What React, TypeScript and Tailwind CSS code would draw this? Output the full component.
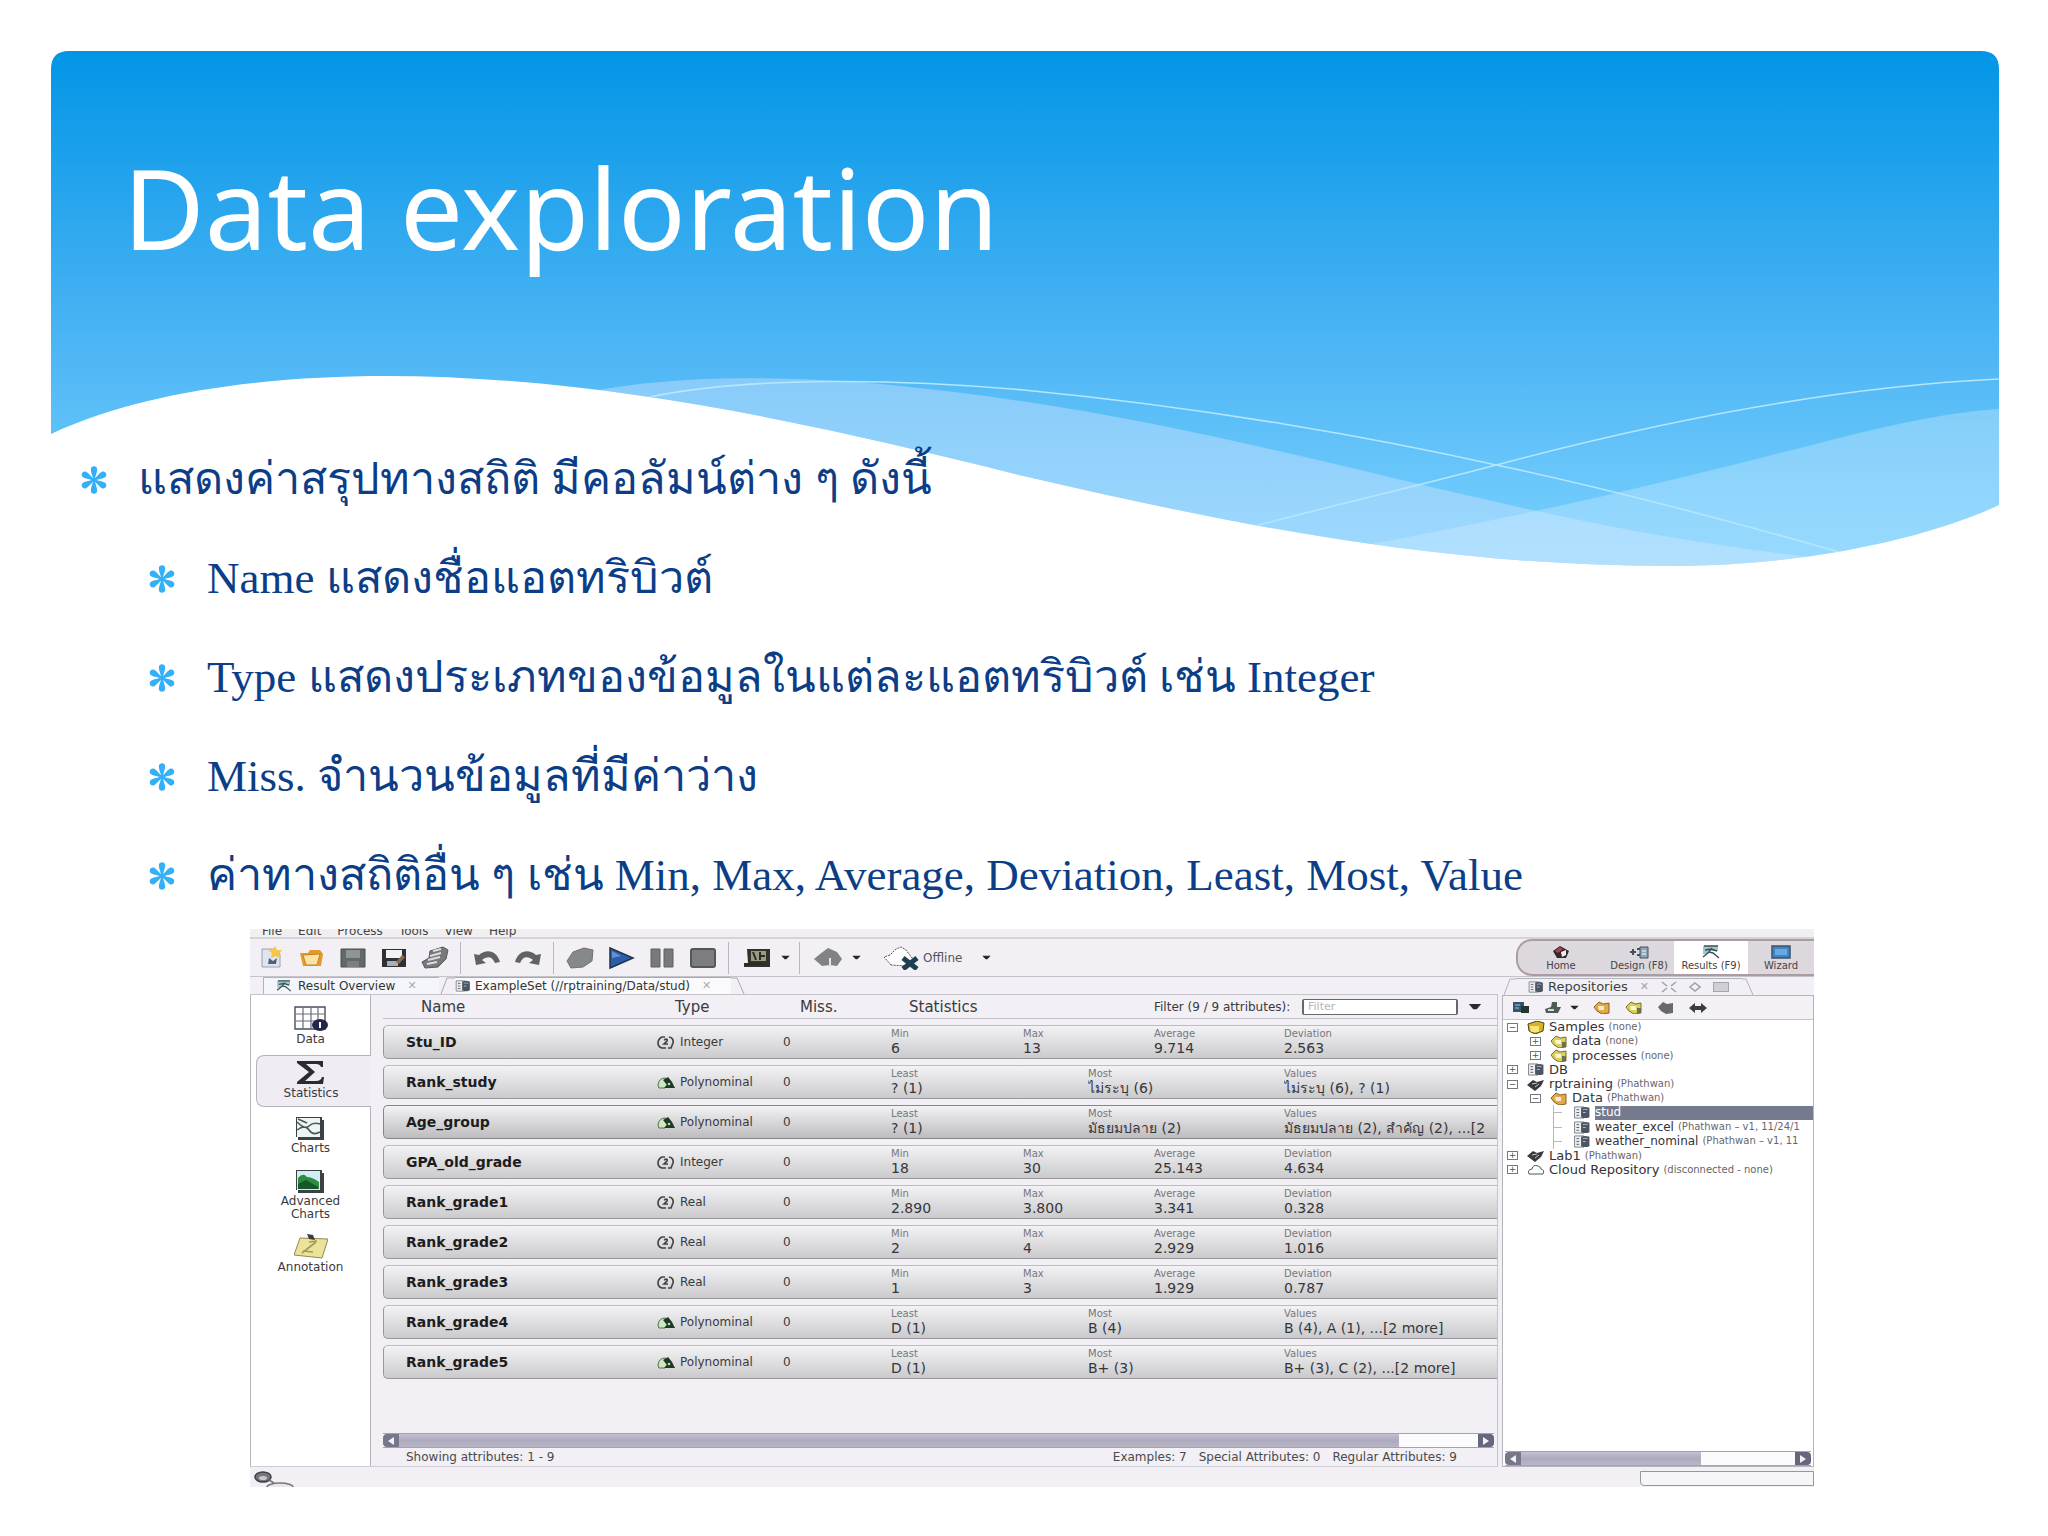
import type { ReactNode } from "react";

type Stat = { label: string; value: string };
type Row = { name: string; type: "Integer" | "Real" | "Polynominal"; stats: Stat[] };

function numeric(min: string, max: string, avg: string, dev: string): Stat[] {
  return [
    { label: "Min", value: min },
    { label: "Max", value: max },
    { label: "Average", value: avg },
    { label: "Deviation", value: dev },
  ];
}

function nominal(least: string, most: string, values: string): Stat[] {
  return [
    { label: "Least", value: least },
    { label: "Most", value: most },
    { label: "Values", value: values },
  ];
}

const rows: Row[] = [
  { name: "Stu_ID", type: "Integer", stats: numeric("6", "13", "9.714", "2.563") },
  { name: "Rank_study", type: "Polynominal", stats: nominal("? (1)", "ไม่ระบุ (6)", "ไม่ระบุ (6), ? (1)") },
  { name: "Age_group", type: "Polynominal", stats: nominal("? (1)", "มัธยมปลาย (2)", "มัธยมปลาย (2), สำคัญ (2), ...[2") },
  { name: "GPA_old_grade", type: "Integer", stats: numeric("18", "30", "25.143", "4.634") },
  { name: "Rank_grade1", type: "Real", stats: numeric("2.890", "3.800", "3.341", "0.328") },
  { name: "Rank_grade2", type: "Real", stats: numeric("2", "4", "2.929", "1.016") },
  { name: "Rank_grade3", type: "Real", stats: numeric("1", "3", "1.929", "0.787") },
  { name: "Rank_grade4", type: "Polynominal", stats: nominal("D (1)", "B (4)", "B (4), A (1), ...[2 more]") },
  { name: "Rank_grade5", type: "Polynominal", stats: nominal("D (1)", "B+ (3)", "B+ (3), C (2), ...[2 more]") },
];

const bullets = [
  "Name แสดงชื่อแอตทริบิวต์",
  "Type แสดงประเภทของข้อมูลในแต่ละแอตทริบิวต์ เช่น Integer",
  "Miss. จำนวนข้อมูลที่มีค่าว่าง",
  "ค่าทางสถิติอื่น ๆ เช่น Min, Max, Average, Deviation, Least, Most, Value",
];

function Banner() {
  return (
    <svg
      viewBox="0 0 1949 516"
      preserveAspectRatio="none"
      className="col-start-1 row-start-1 h-full w-full"
      aria-hidden="true"
    >
      <defs>
        <linearGradient id="sky" x1="0" y1="0" x2="0" y2="1">
          <stop offset="0" stopColor="#0295e6" />
          <stop offset="0.55" stopColor="#4ab4f4" />
          <stop offset="0.85" stopColor="#6cc8fb" />
          <stop offset="1" stopColor="#7bd0ff" />
        </linearGradient>
        <clipPath id="wave">
          <path d="M0 18 Q0 0 18 0 H1931 Q1949 0 1949 18 V454 C1880 486 1760 515 1620 515 C1400 515 1200 478 973 425 C780 377 560 325 334 325 C220 325 90 340 0 383 Z" />
        </clipPath>
      </defs>
      <g clipPath="url(#wave)">
        <rect width="1949" height="516" fill="url(#sky)" />
        <path
          d="M520 345 C600 325 720 322 850 335 C1100 360 1300 420 1482 459 C1580 481 1680 497 1760 506 V600 H520 Z"
          fill="#d6e6ff"
          fillOpacity="0.4"
        />
        <path
          d="M1300 497 C1500 460 1620 430 1789 387 C1850 372 1900 361 1949 358 V600 H1300 Z"
          fill="#d8f0ff"
          fillOpacity="0.33"
        />
        <g fill="none" stroke="#b4e6ff" strokeWidth="1.6">
          <path d="M599 346 C700 325 850 328 973 339 C1160 357 1330 388 1446 414 C1570 440 1690 473 1789 501" />
          <path d="M1208 474 C1290 453 1370 434 1446 414 C1600 373 1780 336 1949 328" />
        </g>
      </g>
    </svg>
  );
}

function Asterisk() {
  return (
    <svg viewBox="0 0 26 28" className="h-7 w-[26px] shrink-0" fill="#33b0f8" aria-hidden="true">
      {[0, 60, 120, 180, 240, 300].map((a) => (
        <path
          key={a}
          transform={`rotate(${a} 13 14)`}
          d="M12 14 C12 10 9.8 7 9.8 3.6 C9.8 -0.8 16.2 -0.8 16.2 3.6 C16.2 7 14 10 14 14 Z"
        />
      ))}
    </svg>
  );
}

function Svg({ children, className = "h-6 w-7" }: { children: ReactNode; className?: string }) {
  return (
    <svg viewBox="0 0 28 24" className={`${className} shrink-0`} aria-hidden="true">
      {children}
    </svg>
  );
}

const icons = {
  create: (
    <Svg>
      <path d="M5 3h13l5 5v13H5z" fill="#dfe5ee" stroke="#9aa3b0" />
      <path d="M11 18l1-6 4 3 4-3-1 6z" fill="#55616f" />
      <path d="M18 0l2 4 5 0-3 4 2 4-5-2-5 2 1-5-4-3 5-1z" fill="#f6c54a" />
    </Svg>
  ),
  open: (
    <Svg>
      <path d="M2 7h8l2-3h10l3 4-2 12H5z" fill="#e39a2c" />
      <path d="M5 9l17-1-3 11H8z" fill="#fbe3a6" stroke="#c98322" />
    </Svg>
  ),
  save: (
    <Svg>
      <path d="M2 3h24v18H2z" fill="#63686b" stroke="#4a4e51" />
      <path d="M7 4h14v8H7z" fill="#8e9594" />
      <path d="M8 15h12v6H8z" fill="#7b807f" />
    </Svg>
  ),
  saveAs: (
    <Svg>
      <path d="M2 3h24v18H2z" fill="#2f3135" />
      <path d="M6 4h16v8H6z" fill="#f2f2f4" />
      <path d="M7 15h11v5H7z" fill="#aab0b8" />
      <path d="M16 16l6-7 3 2-6 7z" fill="#8c6b4d" />
    </Svg>
  ),
  print: (
    <Svg>
      <path d="M9 5l13-4 5 3-2 9-8 8-13 1-3-6 7-4z" fill="#77797d" stroke="#55575b" />
      <path d="M9 10l11-3M7 14l12-3M6 18l10-2M12 5l8-2" stroke="#dcdde0" strokeWidth="2" />
    </Svg>
  ),
  undo: (
    <Svg>
      <path d="M1 8l2 11 10-2-4-3c5-4 10-4 13 3l5-1C24 5 14 2 6 9z" fill="#606266" />
    </Svg>
  ),
  redo: (
    <Svg>
      <path d="M27 8l-2 11-10-2 4-3C14 10 9 10 6 17l-5-1C4 5 14 2 22 9z" fill="#606266" />
    </Svg>
  ),
  build: (
    <Svg>
      <path d="M1 15L7 6 18 2l9 2-1 11-9 6-12 1z" fill="#86888b" stroke="#6f7174" />
    </Svg>
  ),
  play: (
    <Svg>
      <path d="M3 2l23 10L3 22z" fill="#2b5fa8" stroke="#24324a" strokeWidth="1.5" />
      <path d="M5 5l9 5-9 2z" fill="#5f93d6" />
    </Svg>
  ),
  pause: (
    <Svg>
      <path d="M3 3h9v18H3zM16 3h9v18h-9z" fill="#77797b" stroke="#5e6062" />
    </Svg>
  ),
  stop: (
    <Svg>
      <rect x="2" y="3" width="24" height="18" rx="2" fill="#7b7d7f" stroke="#555759" strokeWidth="2" />
    </Svg>
  ),
  monitor: (
    <Svg>
      <path d="M4 3h23v18H1v-4h4z" fill="#33322a" />
      <path d="M8 5h15v10H8z" fill="#9c9b83" />
      <path d="M10 6l3 8M17 6v8M18 10h4M2 18h18" stroke="#2b2a24" strokeWidth="2" />
    </Svg>
  ),
  agent: (
    <Svg>
      <path d="M0 13l6-5 8-6 9 4 5 7-5 7-7-1-8 1z" fill="#808286" />
      <path d="M16 12v9" stroke="#e4e4e8" strokeWidth="2" />
    </Svg>
  ),
};

function CaretDown() {
  return (
    <svg viewBox="0 0 10 6" className="h-[5px] w-[9px] shrink-0" aria-hidden="true">
      <path d="M0 1h10L6 5H4z" fill="#26262a" />
    </svg>
  );
}

function ToolButton({ label, children }: { label: string; children: ReactNode }) {
  return (
    <button type="button" aria-label={label} className="flex h-9 w-[41px] items-center justify-center">
      {children}
    </button>
  );
}

function Separator() {
  return <div className="mx-[5px] h-8 w-px bg-[#b9b7bf]" />;
}

function DataSetIcon({ className = "h-3 w-4" }: { className?: string }) {
  return (
    <svg viewBox="0 0 18 14" className={`${className} shrink-0`} aria-hidden="true">
      <path d="M1 1h10v12H1z" fill="#eef0f4" stroke="#777d88" />
      <path d="M3 4h3M3 7h3M3 10h3" stroke="#555" />
      <path d="M8 2q4-2 9 0v10q-4 2-9 0z" fill="#4c5563" />
      <path d="M10 4q2-1 5 0M10 7h3" stroke="#b7c3d6" />
    </svg>
  );
}

function ResultsIcon({ className = "h-3 w-4" }: { className?: string }) {
  return (
    <svg viewBox="0 0 18 14" className={`${className} shrink-0`} aria-hidden="true">
      <path d="M1 1h15v5H6v3H1z" fill="#9cc9d0" />
      <path d="M2 1h14M3 5l6-1 6 2M1 12l6-5 4 1 6 5M6 8l4-5" stroke="#3d5053" strokeWidth="1.4" fill="none" />
    </svg>
  );
}

function ViewTabs() {
  return (
    <div className="flex h-[18px] min-w-0 items-end border-b border-[#c6c4cb] pl-[13px]">
      <button
        type="button"
        className="flex h-[17px] w-[176px] items-center gap-1 border-l border-t border-[#b3b1ba] bg-[#f4f6fb] pl-3 text-[12px] leading-4 text-[#333]"
      >
        <ResultsIcon />
        <span className="pl-[2px]">Result Overview</span>
        <span className="pl-2 text-[11px] text-[#aaa]">✕</span>
      </button>
      <svg viewBox="0 0 16 17" className="h-[17px] w-4 shrink-0" fill="none" stroke="#a9a7b0" aria-hidden="true">
        <path d="M2 17L8 1h8" />
      </svg>
      <button
        type="button"
        className="flex h-[17px] w-[276px] items-center gap-1 border-t border-[#a9a7b0] bg-[#fafafc] text-[12px] leading-4 text-[#333]"
      >
        <DataSetIcon />
        <span className="whitespace-nowrap">ExampleSet (//rptraining/Data/stud)</span>
        <span className="pl-2 text-[11px] text-[#aaa]">✕</span>
      </button>
      <svg viewBox="0 0 16 17" className="h-[17px] w-4 shrink-0" fill="none" stroke="#a9a7b0" aria-hidden="true">
        <path d="M0 1h6l7 16" />
      </svg>
    </div>
  );
}

const chartFrame = <path d="M2 3h26v3h2v20H4V23H2z" fill="#3b4144" />;

const sideItems = [
  {
    label: "Data",
    box: "h-[60px] border-r border-[#b5b3bb] pt-[10px]",
    icon: (
      <>
        <path d="M1 2h30v22H1z" fill="#fdfdff" stroke="#4c4f58" strokeWidth="1.4" />
        <path d="M1 9h30M1 16h30M9 2v22M17 2v22M24 2v22" stroke="#6b6e77" strokeWidth="1.2" />
        <ellipse cx="26" cy="20" rx="8" ry="6" fill="#23264a" />
        <path d="M26 17v6" stroke="#fff" strokeWidth="2" />
      </>
    ),
  },
  {
    label: "Statistics",
    box: "ml-[5px] h-[52px] rounded-l-lg border-y border-l border-[#b5b3bb] bg-[#efecf4] pt-[3px] pr-[6px]",
    icon: <path d="M3 2h26v6h-2q-1-3-5-3H12l9 8-10 9h11q5 0 6-4h2l-1 7H3v-2l12-10L3 4z" fill="#2b2b2e" />,
  },
  {
    label: "Charts",
    box: "h-[53px] border-r border-[#b5b3bb] pt-[7px]",
    icon: (
      <>
        {chartFrame}
        <path d="M3 4h23v19H3z" fill="#eef4f2" />
        <path d="M3 8q8 8 12 4t11-2M3 16q8-6 12 0t11 2M4 5l9 4" stroke="#46585a" fill="none" strokeWidth="1.5" />
      </>
    ),
  },
  {
    label: "Advanced Charts",
    box: "h-[66px] border-r border-[#b5b3bb] pt-[7px]",
    icon: (
      <>
        {chartFrame}
        <path d="M3 4h23v19H3z" fill="#cfeef2" />
        <path d="M4 11q5-6 9-1 5 0 12 5v7H4z" fill="#2f8a42" />
        <path d="M4 17l8-4 12 7v2H4z" fill="#14582b" />
      </>
    ),
  },
  {
    label: "Annotation",
    box: "grow border-r border-[#b5b3bb] pt-[7px]",
    icon: (
      <>
        <path d="M6 5l28 1-6 19-28-3z" fill="#ece39a" stroke="#8f8850" />
        <path d="M8 20L22 9M9 18l10 1M23 8l-8 1" stroke="#a3995a" strokeWidth="1.6" />
        <path d="M13 1l6 1 2 5-6-1z" fill="#3c3c40" />
      </>
    ),
  },
];

function SideBar() {
  return (
    <nav className="flex w-[121px] shrink-0 flex-col border-l border-[#b5b3bb] bg-white">
      {sideItems.map((item) => (
        <button key={item.label} type="button" className={`flex flex-col items-center justify-start ${item.box}`}>
          <svg viewBox="0 0 34 28" className="h-7 w-[34px] shrink-0" aria-hidden="true">
            {item.icon}
          </svg>
          <span className="w-[80px] text-center text-[12px] leading-[13px] text-[#3a3a3e]">{item.label}</span>
        </button>
      ))}
    </nav>
  );
}

function TypeIcon({ type }: { type: Row["type"] }) {
  if (type === "Polynominal") {
    return (
      <svg viewBox="0 0 18 13" className="h-[13px] w-[18px] shrink-0" aria-hidden="true">
        <path d="M1 9q1-7 7-7l4 3-4 7H2z" fill="#cfe6c4" stroke="#56704e" />
        <path d="M6 4l5-3 4 5 3 6H7l3-3z" fill="#1d3a22" />
        <circle cx="12" cy="8" r="1.3" fill="#b9dcb0" />
      </svg>
    );
  }
  return (
    <svg viewBox="0 0 18 13" className="h-[13px] w-[18px] shrink-0" aria-hidden="true">
      <path d="M8 1H5Q1 3 1 7t4 5h4M7 4q4-2 3 1L7 8h4M12 1q5 1 4 6l-2 5h-3" stroke="#444" strokeWidth="1.7" fill="none" />
    </svg>
  );
}

function StatisticsTable() {
  return (
    <table className="-mt-[6px] w-full table-fixed border-separate border-spacing-x-0 border-spacing-y-[6px]">
      <colgroup>
        <col className="w-[274px]" />
        <col className="w-[126px]" />
        <col className="w-[108px]" />
        <col className="w-[132px]" />
        <col className="w-[65px]" />
        <col className="w-[66px]" />
        <col className="w-[130px]" />
        <col />
      </colgroup>
      <thead>
        <tr className="text-left text-[15px] leading-4 text-[#3a3a40] [&>th]:h-6 [&>th]:border-b [&>th]:border-[#c2c0c8] [&>th]:p-0 [&>th]:font-normal">
          <th className="indent-[38px]">Name</th>
          <th className="indent-[18px]">Type</th>
          <th className="indent-[17px]">Miss.</th>
          <th className="indent-[18px]" colSpan={3}>Statistics</th>
          <th colSpan={2}>
            <div className="flex items-center">
              <label htmlFor="filter" className="w-[148px] whitespace-nowrap text-[12px]">
                Filter (9 / 9 attributes):
              </label>
              <input
                id="filter"
                placeholder="Filter"
                className="h-4 w-[156px] rounded-[2px] border border-x-2 border-[#66666c] bg-white px-1 text-[11px] leading-3 placeholder:text-[#b5b5b8]"
              />
              <button type="button" aria-label="Filter options" className="px-[10px]">
                <svg viewBox="0 0 14 8" className="h-[7px] w-[14px]" aria-hidden="true">
                  <path d="M0 1h14L9 7H5z" fill="#2a2a2e" />
                </svg>
              </button>
            </div>
          </th>
        </tr>
      </thead>
      <tbody>
        {rows.map((row) => {
          const selected = row.name === "Age_group";
          return (
            <tr
              key={row.name}
              className={
                "[&>td]:h-[34px] [&>td]:border-y [&>td]:p-0 [&>td]:bg-linear-to-b [&>td]:from-[#f3f2f4] " +
                (selected
                  ? "[&>td]:border-[#85858a] [&>td]:to-[#bdbcbe]"
                  : "[&>td]:border-b-[#98979b] [&>td]:border-t-[#bcbbc0] [&>td]:to-[#cbcacd]")
              }
            >
              <td className="rounded-l-[5px] border-l border-l-[#98979b] indent-[22px] text-[14px] leading-4 font-bold text-[#1d1d20]">
                {row.name}
              </td>
              <td>
                <div className="flex items-center gap-[5px] text-[12px] leading-4 text-[#3a3a3e]">
                  <TypeIcon type={row.type} />
                  {row.type}
                </div>
              </td>
              <td className="text-[12px] leading-4 text-[#3a3a3e]">0</td>
              {row.stats.map((s) => (
                <td key={s.label} colSpan={s.label === "Max" || s.label === "Least" || s.label === "Most" ? 2 : 1}>
                  <div className="overflow-hidden whitespace-nowrap">
                    <div className="text-[10px] leading-3 text-[#77777c]">{s.label}</div>
                    <div className="text-[14px] leading-4 text-[#36363a]">{s.value}</div>
                  </div>
                </td>
              ))}
            </tr>
          );
        })}
      </tbody>
    </table>
  );
}

function ScrollBar({ thumb }: { thumb: string }) {
  return (
    <div className="flex h-[15px] border-y border-[#a3a1b3] bg-white">
      <button type="button" aria-label="Scroll left" className="flex w-4 items-center justify-center rounded-l bg-[#77778a]">
        <svg viewBox="0 0 8 8" className="h-2 w-2" fill="#f2f2f6" aria-hidden="true">
          <path d="M7 0v8L1 4z" />
        </svg>
      </button>
      <div className={`bg-linear-to-b from-[#c4c0d2] via-[#aeaabd] to-[#b9b6c8] ${thumb}`} />
      <div className="grow bg-[#fbfafd]" />
      <button type="button" aria-label="Scroll right" className="flex w-4 items-center justify-center rounded-r bg-[#66667c]">
        <svg viewBox="0 0 8 8" className="h-2 w-2" fill="#f2f2f6" aria-hidden="true">
          <path d="M1 0v8l6-4z" />
        </svg>
      </button>
    </div>
  );
}

function TreeIcon({ kind }: { kind: string }) {
  if (kind === "set") return <DataSetIcon className="h-[13px] w-[18px]" />;
  return (
    <svg viewBox="0 0 18 13" className="h-[13px] w-[18px] shrink-0" aria-hidden="true">
      {kind === "samples" && (
        <>
          <path d="M1 3l9-3 7 2-1 8-8 3-6-3z" fill="#d8b425" stroke="#4d4318" />
          <path d="M3 5h9v6H4z" fill="#f6e479" />
        </>
      )}
      {kind === "folder" && (
        <>
          <path d="M1 6l5-5 4 2 6-1v10l-7 1-5-3z" fill="#d9cf5c" stroke="#76702c" />
          <path d="M5 5h6v4H6z" fill="#fbf7c8" />
          <path d="M12 7h4v5h-4z" fill="#70704a" />
        </>
      )}
      {kind === "orange" && (
        <>
          <path d="M1 6l5-5 4 2 6-1v10l-7 1-5-3z" fill="#e3a84a" stroke="#8a6224" />
          <path d="M5 5h6v4H6z" fill="#fdeccb" />
        </>
      )}
      {kind === "repo" && (
        <>
          <path d="M0 7l6-5 4 2 7-2-3 6-6 5-4-3z" fill="#3a3a3e" />
          <path d="M5 6l5-1M8 9l4-3" stroke="#c9c9cf" />
        </>
      )}
      {kind === "cloud" && <path d="M2 11q-2-4 3-5 1-5 6-3 3 1 3 3 4 1 2 5z" fill="#fff" stroke="#555" />}
    </svg>
  );
}

const tree = [
  { depth: 0, kind: "samples", sign: "−", name: "Samples", note: "(none)" },
  { depth: 1, kind: "folder", sign: "+", name: "data", note: "(none)" },
  { depth: 1, kind: "folder", sign: "+", name: "processes", note: "(none)" },
  { depth: 0, kind: "set", sign: "+", name: "DB", note: "" },
  { depth: 0, kind: "repo", sign: "−", name: "rptraining", note: "(Phathwan)" },
  { depth: 1, kind: "orange", sign: "−", name: "Data", note: "(Phathwan)" },
  { depth: 2, kind: "set", sign: "", name: "stud", note: "", selected: true },
  { depth: 2, kind: "set", sign: "", name: "weater_excel", note: "(Phathwan – v1, 11/24/1" },
  { depth: 2, kind: "set", sign: "", name: "weather_nominal", note: "(Phathwan – v1, 11" },
  { depth: 0, kind: "repo", sign: "+", name: "Lab1", note: "(Phathwan)" },
  { depth: 0, kind: "cloud", sign: "+", name: "Cloud Repository", note: "(disconnected - none)" },
];

const indents = ["pl-1 text-[13px]", "pl-[27px] text-[13px]", "pl-[50px] text-[12px]"];

function RepositoryPanel() {
  return (
    <aside className="flex w-[312px] shrink-0 flex-col">
      <div className="flex h-[18px] items-end">
        <svg viewBox="0 0 14 17" className="h-[17px] w-[14px]" fill="none" stroke="#b3b1ba" aria-hidden="true">
          <path d="M2 17L8 1h6" />
        </svg>
        <div className="flex h-[17px] w-[226px] items-center gap-1 border-t border-[#b3b1ba] pl-3 text-[13px] leading-4 text-[#3f3f44]">
          <DataSetIcon />
          <span className="pr-2">Repositories</span>
          <span className="text-[11px] text-[#a2a2a8]">✕</span>
          <svg viewBox="0 0 16 12" className="ml-2 h-3 w-4" fill="none" stroke="#a2a2a8" strokeWidth="1.6" aria-hidden="true">
            <path d="M1 1l5 4M15 1l-5 4M1 11l5-4M15 11l-5-4" />
          </svg>
          <svg viewBox="0 0 12 12" className="ml-2 h-3 w-3" fill="none" stroke="#a2a2a8" strokeWidth="1.6" aria-hidden="true">
            <path d="M6 2l5 4-5 4-5-4z" />
          </svg>
          <span className="ml-2 h-[10px] w-4 border border-[#a5a5aa] bg-[#cfcfd5]" />
        </div>
        <svg viewBox="0 0 14 17" className="h-[17px] w-[14px]" fill="none" stroke="#b3b1ba" aria-hidden="true">
          <path d="M0 1h4l7 16" />
        </svg>
      </div>
      <div className="flex grow flex-col border border-[#b5b3bb] bg-white">
        <div className="flex h-6 shrink-0 items-center gap-[14px] border-b border-[#c6c4cb] bg-[#f3f1f6] pl-[9px]">
          <button type="button" aria-label="Add repository">
            <svg viewBox="0 0 18 13" className="h-[13px] w-[18px]" aria-hidden="true">
              <path d="M1 1h11v10H1z" fill="#33556e" />
              <path d="M9 5h8v7h-8z" fill="#27352f" />
              <path d="M3 4h5M3 7h4" stroke="#a7c7dd" />
            </svg>
          </button>
          <button type="button" aria-label="Import data" className="flex items-center gap-2">
            <svg viewBox="0 0 18 13" className="h-[13px] w-[18px]" aria-hidden="true">
              <path d="M1 8l6-2 1-5h5v5h4l-3 6H2z" fill="#4f5b55" />
              <path d="M4 9h6" stroke="#d2d8d4" strokeWidth="2" />
            </svg>
            <CaretDown />
          </button>
          <button type="button" aria-label="Open folder"><TreeIcon kind="orange" /></button>
          <button type="button" aria-label="New folder"><TreeIcon kind="folder" /></button>
          <button type="button" aria-label="Delete">
            <svg viewBox="0 0 18 13" className="h-[13px] w-[18px]" aria-hidden="true">
              <path d="M1 6l5-5 4 2 6-1v10l-7 1-5-3z" fill="#68686d" />
            </svg>
          </button>
          <button type="button" aria-label="Locate">
            <svg viewBox="0 0 18 10" className="h-[10px] w-[18px]" aria-hidden="true">
              <path d="M0 5l6-5v3h6V0l6 5-6 5V7H6v3z" fill="#3b3b40" />
            </svg>
          </button>
        </div>
        <ul className="grid h-[157px] shrink-0 grid-rows-11 overflow-hidden">
          {tree.map((node) => (
            <li
              key={node.name}
              className={`flex items-center leading-[14px] whitespace-nowrap text-[#333338] ${indents[node.depth]}`}
            >
              {node.sign ? (
                <button
                  type="button"
                  aria-label={`Toggle ${node.name}`}
                  className="flex h-[9px] w-[11px] shrink-0 items-center justify-center border border-[#77777c] text-[9px] leading-none text-[#555]"
                >
                  {node.sign}
                </button>
              ) : (
                <span className="h-[15px] w-[11px] shrink-0 border-l border-[#b9b9bd]">
                  <span className="mt-[7px] block h-px w-2 bg-[#b9b9bd]" />
                </span>
              )}
              <span className="pr-1 pl-[9px]">
                <TreeIcon kind={node.kind} />
              </span>
              <span className={node.selected ? "h-[14px] grow bg-[#767a8e] leading-[13px] text-white" : ""}>
                {node.name}
              </span>
              {node.note && <span className="pl-1 text-[10px] text-[#66666b]">{node.note}</span>}
            </li>
          ))}
        </ul>
        <div className="mt-auto px-[2px]">
          <ScrollBar thumb="w-[180px]" />
        </div>
      </div>
    </aside>
  );
}

function Perspectives() {
  const cell = "flex h-full flex-col items-center justify-center gap-px text-[10px] leading-[11px] text-[#4a3f44]";
  return (
    <div className="flex h-[37px] w-[298px] shrink-0 overflow-hidden rounded-l-2xl border-y-2 border-l-2 border-[#ab9ba2] bg-[#dcd8dd]">
      <button type="button" className={`${cell} w-[86px]`}>
        <svg viewBox="0 0 18 14" className="h-[14px] w-[18px]" aria-hidden="true">
          <path d="M1 6l7-5 9 5-3 7H5z" fill="#33282b" />
          <path d="M9 7l5-2v5l-4 2z" fill="#f2eef0" />
          <path d="M3 6l5-4 3 2-5 4z" fill="#a8434b" />
        </svg>
        Home
      </button>
      <button type="button" className={`${cell} w-[70px]`}>
        <svg viewBox="0 0 20 14" className="h-[14px] w-5" aria-hidden="true">
          <path d="M1 7h6M4 4v6M8 4h4M8 10h4" stroke="#47515c" strokeWidth="2" />
          <path d="M11 2h8v11h-8z" fill="#8da7b8" stroke="#47515c" />
          <path d="M13 6h4M13 9h4" stroke="#fff" />
        </svg>
        Design (F8)
      </button>
      <button type="button" className={`${cell} w-[74px] bg-white`}>
        <ResultsIcon className="h-[14px] w-[18px]" />
        Results (F9)
      </button>
      <button type="button" className={`${cell} grow`}>
        <svg viewBox="0 0 20 14" className="h-[14px] w-5" aria-hidden="true">
          <path d="M1 1h18v12H1z" fill="#3d86c6" stroke="#3c526a" strokeWidth="1.5" />
          <path d="M4 4h12v6H4z" fill="#69a9e0" />
        </svg>
        Wizard
      </button>
    </div>
  );
}

function RapidMinerWindow() {
  return (
    <section className="mt-1 mr-[234px] ml-[250px] flex h-[558px] flex-col overflow-hidden bg-[#f2eff5] font-['DejaVu_Sans','Noto_Sans',sans-serif]">
      {/* menu bar, cut off by the top edge of the window */}
      <div className="flex h-[10px] shrink-0 items-end gap-4 overflow-hidden border-b-2 border-[#d5d3d8] bg-[#f1eff2] pl-3 text-[12px] leading-[12px] text-[#444]">
        <span>File</span>
        <span>Edit</span>
        <span>Process</span>
        <span>Tools</span>
        <span>View</span>
        <span>Help</span>
      </div>
      <div className="flex h-[38px] shrink-0 items-center justify-between border-b border-[#c4c2ca]">
        <div className="flex items-center">
          <ToolButton label="New">{icons.create}</ToolButton>
          <ToolButton label="Open">{icons.open}</ToolButton>
          <ToolButton label="Save">{icons.save}</ToolButton>
          <ToolButton label="Save as">{icons.saveAs}</ToolButton>
          <ToolButton label="Print">{icons.print}</ToolButton>
          <Separator />
          <ToolButton label="Undo">{icons.undo}</ToolButton>
          <ToolButton label="Redo">{icons.redo}</ToolButton>
          <Separator />
          <ToolButton label="Build">{icons.build}</ToolButton>
          <ToolButton label="Run">{icons.play}</ToolButton>
          <ToolButton label="Pause">{icons.pause}</ToolButton>
          <ToolButton label="Stop">{icons.stop}</ToolButton>
          <Separator />
          <button type="button" aria-label="Monitor" className="flex w-[60px] items-center gap-[10px] pl-[9px]">
            {icons.monitor}
            <CaretDown />
          </button>
          <Separator />
          <button type="button" aria-label="Agent" className="flex w-[78px] items-center gap-[10px] pl-[9px]">
            {icons.agent}
            <CaretDown />
          </button>
          <button type="button" className="flex items-center gap-1 text-[12px] text-[#55555a]">
            <svg viewBox="0 0 36 24" className="h-6 w-9 shrink-0" aria-hidden="true">
              <path d="M8 19l-7-8 6-2 6-6 5-2 5 3 3 4 4 5-5 7z" fill="#fff" stroke="#55555a" strokeDasharray="2 1" />
              <path d="M20 12l14 11M34 12L20 23" stroke="#1f3f50" strokeWidth="5" />
            </svg>
            Offline
            <span className="pl-4"><CaretDown /></span>
          </button>
        </div>
        <Perspectives />
      </div>
      <div className="flex min-h-0 grow">
        <div className="flex min-w-0 grow flex-col">
          <ViewTabs />
          <div className="flex min-h-0 grow border-b border-[#cfcdd4]">
            <SideBar />
            <div className="flex min-w-0 grow flex-col border-r border-[#c6c4cb] pl-3">
              <StatisticsTable />
              <div className="mt-auto pr-[3px]">
                <ScrollBar thumb="w-[1000px]" />
              </div>
              <div className="flex h-[18px] items-center justify-between pr-10 pl-[23px] text-[12px] leading-4 text-[#4a4a4e]">
                <span>Showing attributes: 1 - 9</span>
                <span className="flex gap-3">
                  <span>Examples: 7</span>
                  <span>Special Attributes: 0</span>
                  <span>Regular Attributes: 9</span>
                </span>
              </div>
            </div>
          </div>
        </div>
        <div className="w-1 shrink-0" />
        <RepositoryPanel />
      </div>
      <div className="flex h-5 shrink-0 items-start justify-between overflow-hidden">
        <svg viewBox="0 0 48 21" className="h-[21px] w-12" aria-hidden="true">
          <ellipse cx="13" cy="10" rx="8" ry="5" fill="#77777b" stroke="#3d3d42" strokeWidth="1.5" />
          <ellipse cx="13" cy="11" rx="4" ry="2" fill="#c9c9cd" />
          <ellipse cx="30" cy="20" rx="13" ry="4" fill="#e9e7ec" stroke="#77777b" strokeWidth="1.5" />
          <path d="M19 13l5 3" stroke="#77777b" strokeWidth="1.5" />
        </svg>
        <div className="mt-1 h-[15px] w-[174px] rounded-bl border border-[#98969e] bg-[#f6f5f8]" />
      </div>
    </section>
  );
}

export default function App() {
  return (
    <main className="min-h-screen overflow-hidden bg-white">
      <header className="mt-[51px] mr-[49px] ml-[51px] grid h-[516px]">
        <Banner />
        <h1 className="col-start-1 row-start-1 pt-20 pl-[72px] font-['Noto_Sans',sans-serif] text-[112px] leading-[152px] text-white">
          Data exploration
        </h1>
      </header>
      <ul className="relative -mt-[137px] pl-[81px] font-['Liberation_Serif',serif] text-[45px] leading-[99px] whitespace-nowrap text-[#0b3e87]">
        <li>
          <div className="flex items-center gap-[31px]">
            <Asterisk />
            <span>แสดงค่าสรุปทางสถิติ มีคอลัมน์ต่าง ๆ ดังนี้</span>
          </div>
          <ul className="pl-[68px]">
            {bullets.map((b) => (
              <li key={b} className="flex items-center gap-[32px]">
                <Asterisk />
                <span>{b}</span>
              </li>
            ))}
          </ul>
        </li>
      </ul>
      <RapidMinerWindow />
    </main>
  );
}
